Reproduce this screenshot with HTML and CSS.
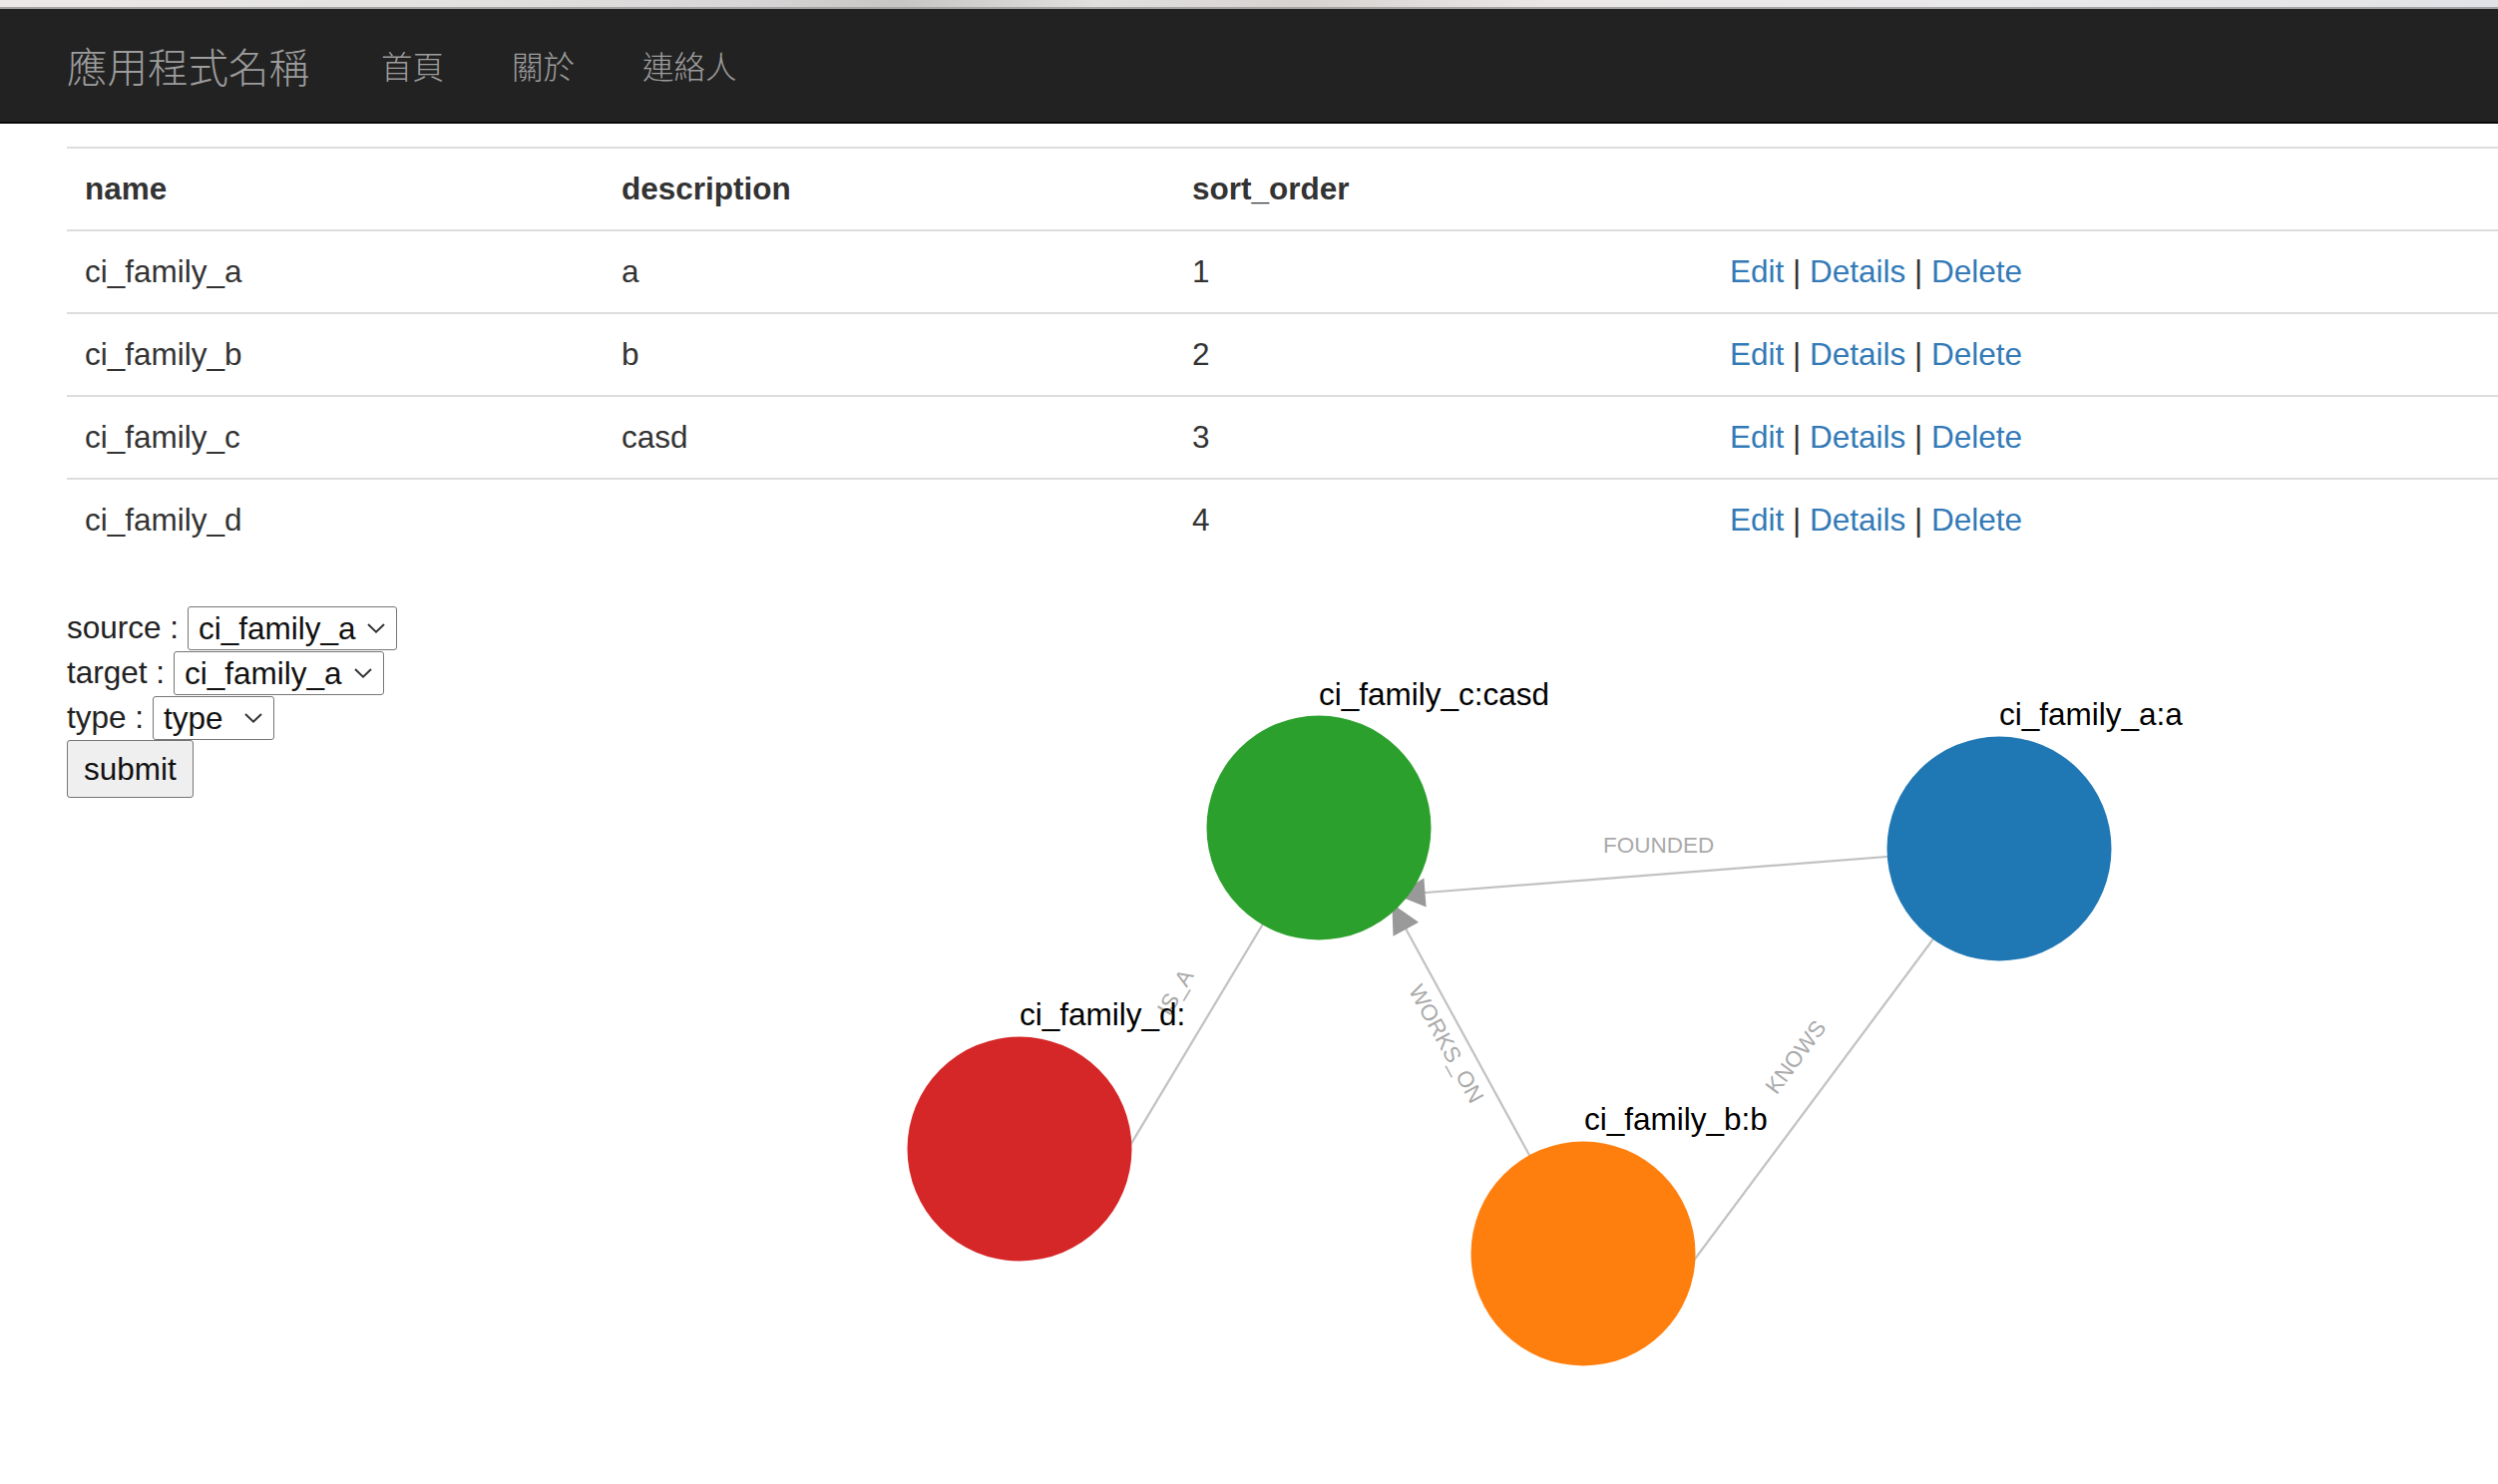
FILE: index.html
```html
<!DOCTYPE html>
<html lang="zh-Hant">
<head>
<meta charset="utf-8">
<title>應用程式名稱</title>
<link rel="stylesheet" href="styles.css">
</head>
<body>
<div class="topstrip"></div>
<nav class="navbar">
  <a class="brand" href="#">應用程式名稱</a>
  <ul class="nav">
    <li><a href="#">首頁</a></li>
    <li><a href="#">關於</a></li>
    <li><a href="#">連絡人</a></li>
  </ul>
</nav>
<main class="content">
  <table class="table">
    <colgroup>
      <col class="c1"><col class="c2"><col class="c3"><col class="c4">
    </colgroup>
    <thead>
      <tr><th>name</th><th>description</th><th>sort_order</th><th></th></tr>
    </thead>
    <tbody>
      <tr><td>ci_family_a</td><td>a</td><td>1</td><td><a href="#">Edit</a> | <a href="#">Details</a> | <a href="#">Delete</a></td></tr>
      <tr><td>ci_family_b</td><td>b</td><td>2</td><td><a href="#">Edit</a> | <a href="#">Details</a> | <a href="#">Delete</a></td></tr>
      <tr><td>ci_family_c</td><td>casd</td><td>3</td><td><a href="#">Edit</a> | <a href="#">Details</a> | <a href="#">Delete</a></td></tr>
      <tr><td>ci_family_d</td><td></td><td>4</td><td><a href="#">Edit</a> | <a href="#">Details</a> | <a href="#">Delete</a></td></tr>
    </tbody>
  </table>

  <div class="lower">
    <form class="relform">
      <div class="frow">
        <label class="flabel">source :</label>
        <span class="sel sel-wide">
          <select><option>ci_family_a</option><option>ci_family_b</option><option>ci_family_c</option><option>ci_family_d</option></select>
          <svg class="chev" viewBox="0 0 18 10" width="18" height="10"><polyline points="1,1 9,8.6 17,1"/></svg>
        </span>
      </div>
      <div class="frow">
        <label class="flabel">target :</label>
        <span class="sel sel-wide2">
          <select><option>ci_family_a</option><option>ci_family_b</option><option>ci_family_c</option><option>ci_family_d</option></select>
          <svg class="chev" viewBox="0 0 18 10" width="18" height="10"><polyline points="1,1 9,8.6 17,1"/></svg>
        </span>
      </div>
      <div class="frow">
        <label class="flabel">type :</label>
        <span class="sel sel-narrow">
          <select><option>type</option></select>
          <svg class="chev" viewBox="0 0 18 10" width="18" height="10"><polyline points="1,1 9,8.6 17,1"/></svg>
        </span>
      </div>
      <button type="button" class="btn">submit</button>
    </form>

    <svg class="graph" width="2097" height="881" viewBox="0 0 2097 881">
      <g transform="translate(-407,-607)">
        <g class="links">
          <line x1="2006" y1="850" x2="1391" y2="898"/>
          <line x1="1636" y1="1347" x2="1391" y2="898"/>
          <line x1="1119.6" y1="1170.7" x2="1280.4" y2="902.3"/>
          <line x1="1636" y1="1347" x2="2006" y2="850"/>
        </g>
        <g class="arrows">
          <polygon points="1429.6,909.6 1427.4,880.4 1399.3,897.2"/>
          <polygon points="1422.1,924.7 1396.5,938.7 1395.3,906.0"/>
        </g>
        <g class="edgelabels">
          <text transform="translate(1662.7,847)">FOUNDED</text>
          <text transform="translate(1449.7,1046.7) rotate(61.3)">WORKS_ON</text>
          <text transform="translate(1178.3,995) rotate(-59.1)">IS_A</text>
          <text transform="translate(1800,1060) rotate(-53.4)">KNOWS</text>
        </g>
        <g class="nodes">
          <circle cx="1322" cy="830" r="112.5" fill="#2ca02c"/>
          <circle cx="2004" cy="851" r="112.5" fill="#1f77b4"/>
          <circle cx="1022" cy="1152" r="112.5" fill="#d62728"/>
          <circle cx="1587" cy="1257" r="112.5" fill="#ff7f0e"/>
        </g>
        <g class="nodelabels">
          <text x="1322" y="707">ci_family_c:casd</text>
          <text x="2004" y="727">ci_family_a:a</text>
          <text x="1022" y="1028">ci_family_d:</text>
          <text x="1588" y="1133">ci_family_b:b</text>
        </g>
      </g>
    </svg>
  </div>
</main>
</body>
</html>
```

FILE: styles.css
```css
* {
  box-sizing: border-box;
}

html,
body {
  margin: 0;
  padding: 0;
}

body {
  width: 2504px;
  height: 1488px;
  overflow: hidden;
  background: #fff;
  color: #333;
  font-family: "Liberation Sans", Arial, Helvetica, sans-serif;
  font-size: 31.5px;
  line-height: 45px;
}

/* top sliver of the window above the page */
.topstrip {
  height: 9px;
  border-bottom: 2px solid #a2a2a2;
  background: linear-gradient(90deg, #ece8e8 0%, #e4e1e1 18%, #d8d6d6 30%, #c8c6c4 36%, #e2e0df 44%, #d6d3d1 52%, #ebe7e7 62%, #e9e8ea 80%, #e2e3e6 100%);
}

/* navbar */
.navbar {
  display: flex;
  align-items: center;
  height: 115px;
  padding-left: 67px;
  background: #222;
  border-bottom: 2px solid #080808;
}

.brand {
  font-family: "Noto Sans CJK TC", "Noto Sans CJK SC", sans-serif;
  font-weight: 300;
  font-size: 40.5px;
  line-height: 45px;
  color: #9d9d9d;
  text-decoration: none;
  padding-right: 38px;
}

.nav {
  display: flex;
  margin: 0;
  padding: 0;
  list-style: none;
}

.nav a {
  display: block;
  padding: 0 34px;
  font-family: "Noto Sans CJK TC", "Noto Sans CJK SC", sans-serif;
  font-weight: 300;
  font-size: 31.5px;
  line-height: 45px;
  color: #9d9d9d;
  text-decoration: none;
}

/* content */
.content {
  padding: 23px 0 0 67px;
}

.table {
  width: 2437px;
  table-layout: fixed;
  border-collapse: collapse;
  border-spacing: 0;
  margin-bottom: 45px;
}

.c1 { width: 538px; }
.c2 { width: 572px; }
.c3 { width: 539px; }
.c4 { width: 788px; }

.table th,
.table td {
  padding: 18px;
  line-height: 45px;
  text-align: left;
  vertical-align: top;
  border-top: 2px solid #ddd;
  white-space: nowrap;
}

.table th {
  font-weight: bold;
}

.table a {
  color: #337ab7;
  text-decoration: none;
}

/* lower section */
.lower {
  display: flex;
  align-items: flex-start;
}

.relform {
  width: 340px;
  flex: none;
  margin: 0;
}

.frow {
  display: flex;
  align-items: center;
  height: 45px;
}

.flabel {
  margin-right: 9px;
  color: #222;
}

.sel {
  position: relative;
  display: block;
  height: 44px;
}

.sel select {
  appearance: none;
  -webkit-appearance: none;
  display: block;
  width: 100%;
  height: 44px;
  margin: 0;
  padding: 0 0 0 10px;
  border: 1px solid #767676;
  border-radius: 3px;
  background: #fff;
  color: #111;
  font-family: inherit;
  font-size: 31.5px;
  line-height: 42px;
}

.sel-wide { width: 210px; }
.sel-wide2 { width: 211px; }
.sel-narrow { width: 122px; }

.chev {
  position: absolute;
  right: 12px;
  top: 17px;
  pointer-events: none;
}

.chev polyline {
  fill: none;
  stroke: #333;
  stroke-width: 2;
}

.btn {
  display: block;
  height: 58px;
  margin: 0;
  padding: 0 16px;
  border: 1px solid #767676;
  border-radius: 3px;
  background: #efefef;
  color: #111;
  font-family: inherit;
  font-size: 31.5px;
  line-height: 56px;
}

/* graph */
.graph {
  flex: none;
  display: block;
}

.links line {
  stroke: #999;
  stroke-opacity: 0.6;
  stroke-width: 2.25;
}

.arrows polygon {
  fill: #999;
}

.edgelabels text {
  fill: #aaa;
  font-family: "Liberation Sans", Arial, sans-serif;
  font-size: 22.5px;
  text-anchor: middle;
  dominant-baseline: central;
}

.nodelabels text {
  fill: #000;
  font-family: "Liberation Sans", Arial, sans-serif;
  font-size: 31.5px;
}
```
